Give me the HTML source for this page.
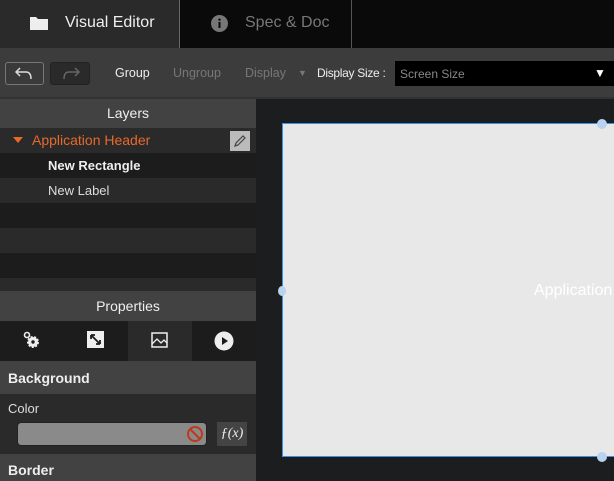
<!DOCTYPE html>
<html><head><style>
*{box-sizing:border-box;margin:0;padding:0}
html,body{width:614px;height:481px;overflow:hidden}
body{background:#1c1d1f;font-family:"Liberation Sans",sans-serif;position:relative;font-size:13px}
.a{position:absolute}
</style></head><body>
<div class="a" style="left:0;top:0;width:614px;height:48px;background:#0a0a0a"></div>
<div class="a" style="left:0;top:0;width:179px;height:48px;background:#2a2a2a"></div>
<div class="a" style="left:179px;top:0;width:1px;height:48px;background:#666"></div>
<div class="a" style="left:351px;top:0;width:1px;height:48px;background:#555"></div>
<svg class="a" style="left:29px;top:15px" width="20" height="16"><path d="M1 2h6l2 2h10v11H1z" fill="#eee"/></svg>
<div class="a" style="left:65px;top:14px;color:#eee;font-size:16px">Visual Editor</div>
<svg class="a" style="left:211px;top:15px" width="17" height="17"><circle cx="8.5" cy="8.5" r="8.5" fill="#777"/><rect x="7.5" y="7" width="2" height="6" fill="#0a0a0a"/><circle cx="8.5" cy="4.7" r="1.2" fill="#0a0a0a"/></svg>
<div class="a" style="left:245px;top:14px;color:#777;font-size:16px">Spec &amp; Doc</div>
<div class="a" style="left:0;top:48px;width:614px;height:49px;background:#3c3c3c"></div>
<div class="a" style="left:5px;top:62px;width:39px;height:23px;border:1px solid #777;border-radius:3px;background:#3a3a3a"></div>
<svg class="a" style="left:15px;top:66px" width="20" height="15"><path d="M5 2L1 6l4 4M1 6h10c4 0 5 3 5 7" stroke="#ddd" stroke-width="1.5" fill="none"/></svg>
<div class="a" style="left:50px;top:62px;width:40px;height:23px;border:1px solid #222;border-radius:3px;background:#2a2a2a"></div>
<svg class="a" style="left:61px;top:66px" width="20" height="15"><path d="M14 2l4 4-4 4M18 6H8c-4 0-5 3-5 7" stroke="#666" stroke-width="1.5" fill="none"/></svg>
<div class="a" style="left:115px;top:66px;color:#eee;font-size:12.5px">Group</div>
<div class="a" style="left:173px;top:66px;color:#777;font-size:12.5px">Ungroup</div>
<div class="a" style="left:245px;top:66px;color:#777;font-size:12.5px">Display</div>
<div class="a" style="left:298px;top:68px;color:#777;font-size:9px">▼</div>
<div class="a" style="left:317px;top:66px;color:#eee;font-size:12px;letter-spacing:-0.3px">Display Size :</div>
<div class="a" style="left:395px;top:61px;width:219px;height:25px;background:#000"></div>
<div class="a" style="left:400px;top:67px;color:#888;font-size:12px">Screen Size</div>
<div class="a" style="left:594px;top:66px;color:#fff;font-size:12px">▼</div>
<div class="a" style="left:0;top:97px;width:614px;height:2px;background:#333"></div>
<div class="a" style="left:0;top:99px;width:256px;height:382px;background:#1c1c1c"></div>
<div class="a" style="left:0;top:99px;width:256px;height:29px;background:#424242;color:#eee;text-align:center;line-height:29px;font-size:14px">Layers</div>
<div class="a" style="left:0;top:128px;width:256px;height:25px;background:#2a2a2a"></div>
<div class="a" style="left:0;top:178px;width:256px;height:25px;background:#2a2a2a"></div>
<div class="a" style="left:0;top:228px;width:256px;height:25px;background:#2a2a2a"></div>
<div class="a" style="left:0;top:278px;width:256px;height:13px;background:#2a2a2a"></div>
<svg class="a" style="left:13px;top:137px" width="10" height="7"><path d="M0 0h10L5 6z" fill="#e8692c"/></svg>
<div class="a" style="left:32px;top:132px;color:#e8692c;font-size:14px">Application Header</div>
<div class="a" style="left:230px;top:131px;width:20px;height:20px;background:#bbb"></div>
<svg class="a" style="left:233px;top:134px" width="14" height="14"><path d="M2 12l1-3 7-7 2 2-7 7z" stroke="#444" stroke-width="1.2" fill="none"/></svg>
<div class="a" style="left:48px;top:158px;color:#eee;font-weight:bold">New Rectangle</div>
<div class="a" style="left:48px;top:183px;color:#ddd">New Label</div>
<div class="a" style="left:0;top:291px;width:256px;height:30px;background:#424242;color:#eee;text-align:center;line-height:30px;font-size:14px">Properties</div>
<div class="a" style="left:128px;top:321px;width:64px;height:40px;background:#2a2a2a"></div>
<svg class="a" style="left:22px;top:331px" width="22" height="20"><circle cx="5" cy="4" r="2.5" stroke="#eee" stroke-width="1.6" fill="none"/><circle cx="11" cy="11" r="5" fill="#eee" stroke="#eee" stroke-width="2" stroke-dasharray="2 1.5"/><circle cx="11" cy="11" r="1.7" fill="#1c1c1c"/></svg>
<svg class="a" style="left:87px;top:331px" width="18" height="18"><rect width="17" height="17" fill="#eee"/><path d="M4 4l9 9M4 4h4M4 4v4M13 13h-4M13 13v-4" stroke="#1c1c1c" stroke-width="1.8" fill="none"/></svg>
<svg class="a" style="left:151px;top:332px" width="18" height="17"><rect x="1" y="1" width="15" height="14" stroke="#eee" stroke-width="1.5" fill="none"/><path d="M1 12l5-5 4 4 3-3 3 3" stroke="#eee" stroke-width="1.3" fill="none"/></svg>
<svg class="a" style="left:214px;top:331px" width="20" height="20"><circle cx="10" cy="10" r="9.5" fill="#eee"/><path d="M8 6v8l6-4z" fill="#1c1c1c"/></svg>
<div class="a" style="left:0;top:361px;width:256px;height:33px;background:#424242;color:#eee;font-weight:bold;padding-left:8px;line-height:34px;font-size:14px">Background</div>
<div class="a" style="left:0;top:394px;width:256px;height:60px;background:#2a2a2a"></div>
<div class="a" style="left:8px;top:401px;color:#ddd">Color</div>
<div class="a" style="left:17px;top:422px;width:190px;height:24px;background:#8a8a8a;border:1px solid #222;border-radius:4px"></div>
<svg class="a" style="left:186px;top:425px" width="18" height="18"><circle cx="9" cy="9" r="7" stroke="#c0381a" stroke-width="2" fill="none"/><path d="M4 4l10 10" stroke="#c0381a" stroke-width="2"/></svg>
<div class="a" style="left:217px;top:422px;width:30px;height:24px;background:#444;color:#eee;font-style:italic;text-align:center;line-height:24px;font-family:'Liberation Serif',serif;font-size:14px">ƒ(x)</div>
<div class="a" style="left:0;top:454px;width:256px;height:27px;background:#424242;color:#eee;font-weight:bold;padding-left:8px;line-height:32px;font-size:14px">Border</div>
<div class="a" style="left:282px;top:123px;width:360px;height:334px;background:#e8e8e8;border:1px solid #3d8fe8"></div>
<div class="a" style="left:534px;top:282px;color:#fff;font-size:16px">Application</div>
<div class="a" style="left:597px;top:119px;width:10px;height:10px;border-radius:50%;background:#b8d2f0"></div>
<div class="a" style="left:597px;top:452px;width:10px;height:10px;border-radius:50%;background:#b8d2f0"></div>
<div class="a" style="left:278px;top:286px;width:8px;height:10px;border-radius:50%;background:#b8d2f0"></div>
</body></html>
